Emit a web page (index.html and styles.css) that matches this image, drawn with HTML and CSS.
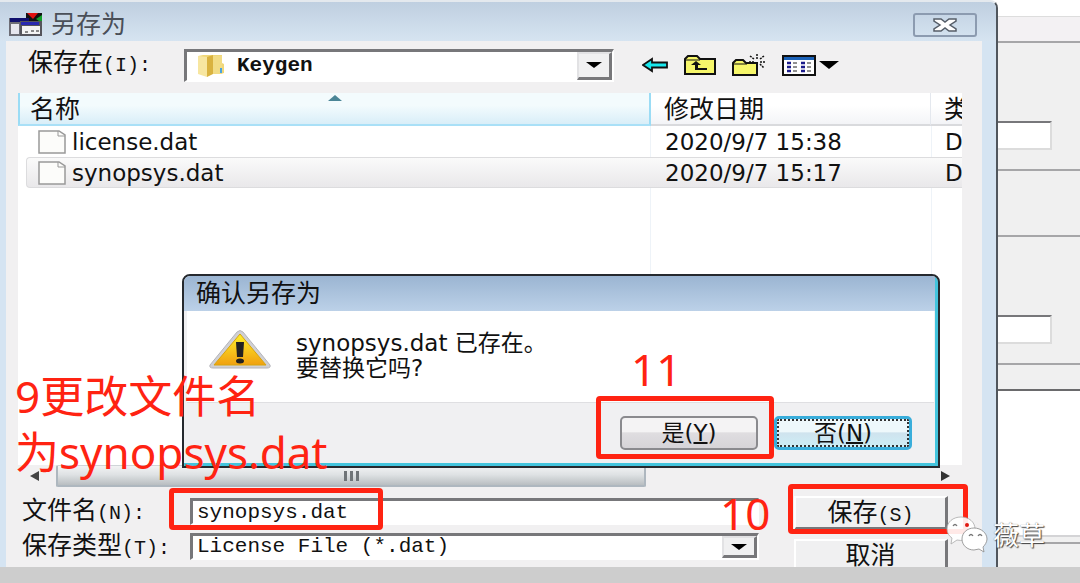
FILE: index.html
```html
<!DOCTYPE html>
<html lang="zh-CN">
<head>
    <meta charset="UTF-8">
    <meta name="viewport" content="width=device-width, initial-scale=1.0">
    <title>另存为</title>
    <link rel="stylesheet" href="styles.css">
</head>
<body>
    <main class="desktop">
        <section class="save-window">
            <header class="title-bar">
                <svg class="app-icon" width="34" height="24" viewBox="0 0 34 24">
                    <rect x="17" y="0" width="16" height="10" fill="#111"/>
                    <path d="M18 0h11l-5 6z" fill="#e01010"/>
                    <path d="M33 2v8l-6-4z" fill="#11a02a"/>
                    <rect x="0" y="5" width="20" height="18" fill="#6d6d76"/>
                    <rect x="1" y="5" width="19" height="4" fill="#10106e"/>
                    <rect x="2" y="11" width="8" height="10" fill="#e6e6ee"/>
                    <rect x="11" y="8" width="22" height="15" fill="#55555c"/>
                    <rect x="12" y="9" width="18" height="3" fill="#2929b0"/>
                    <rect x="13" y="13" width="18" height="8" fill="#f3f3f3"/>
                    <path d="M16 19h3M22 18h3M27 18h3" stroke="#888" stroke-width="2"/>
                </svg>
                <h1>另存为</h1>
                <button class="close" type="button" aria-label="关闭">
                    <svg width="24" height="14" viewBox="0 0 24 14">
                        <path d="M1 1h7l4 3 4-3h7v2l-6 4 6 4v2h-7l-4-3-4 3H1v-2l6-4-6-4z" fill="#fff" stroke="#555d68" stroke-width="1.5"/>
                    </svg>
                </button>
            </header>

            <div class="client">
                <div class="look-in">
                    <label for="folder">保存在<span class="key">(I):</span></label>
                    <div class="combo folder-combo">
                        <svg width="28" height="24" viewBox="0 0 28 24">
                            <path d="M1 2l5-1h19v8l2 1v9l-3 1H9l-8-1z" fill="#f0d778"/>
                            <path d="M1 2l9 1v20L1 20z" fill="#f7e6a0"/>
                            <path d="M10 3l6-2v19l-6 3z" fill="#d9b23f"/>
                            <path d="M16 2h9v18h-9z" fill="#f2dc85"/>
                            <path d="M24 14v5" stroke="#4aa3e0" stroke-width="2"/>
                        </svg>
                        <select id="folder"><option>Keygen</option></select>
                        <span class="drop"></span>
                    </div>
                    <div class="tools">
                        <button type="button" aria-label="后退">
                            <svg width="26" height="16" viewBox="0 0 26 16"><path d="M1 8l9-6v3.500h15v5H10V14z" fill="#18e8ee" stroke="#111" stroke-width="1.800"/></svg>
                        </button>
                        <button type="button" aria-label="向上一级">
                            <svg width="32" height="20" viewBox="0 0 32 20">
                                <path d="M1 19V4l3-3h9l3 3h15v15z" fill="#f6f66a" stroke="#111" stroke-width="2"/>
                                <path d="M1 5h15" stroke="#111"/>
                                <path d="M7 10l5-4 5 4zM11 9h3v4h9v2H11z" fill="#111"/>
                            </svg>
                        </button>
                        <button type="button" aria-label="新建文件夹">
                            <svg width="34" height="22" viewBox="0 0 34 22">
                                <path d="M1 21V9l3-3h7l3 3h11v12z" fill="#f6f66a" stroke="#111" stroke-width="2"/>
                                <path d="M1 10h14" stroke="#111"/>
                                <path d="M25 0v5M25 11v4M17 8h5M28 8h6M18 2l4 3M32 2l-4 3M28 10l4 4" stroke="#111" stroke-width="1.500" stroke-dasharray="2 1"/>
                            </svg>
                        </button>
                        <button type="button" aria-label="查看">
                            <svg width="57" height="21" viewBox="0 0 57 21">
                                <rect x="1" y="1" width="32" height="19" fill="#fff" stroke="#111" stroke-width="2"/>
                                <rect x="2" y="2" width="30" height="3" fill="#1b62b8"/>
                                <path d="M5 8h4M5 12h4M5 16h4M19 8h4M19 12h4M19 16h4" stroke="#1c1c8c" stroke-width="2.500"/>
                                <path d="M11 8h4M11 12h4M11 16h4M25 8h4M25 12h4M25 16h4" stroke="#222" stroke-width="1.200"/>
                                <path d="M37 6h20l-10 8z" fill="#000"/>
                            </svg>
                        </button>
                    </div>
                </div>

                <div class="file-list">
                    <table>
                        <colgroup><col><col class="col-date"><col class="col-type"></colgroup>
                        <thead>
                            <tr>
                                <th class="sorted">名称<svg width="14" height="6" viewBox="0 0 14 6"><path d="M0 6l7-6 7 6z" fill="#4a8596"/></svg></th>
                                <th>修改日期</th>
                                <th>类</th>
                            </tr>
                        </thead>
                        <tbody>
                            <tr>
                                <td class="file"><div><svg width="28" height="24" viewBox="0 0 28 24"><path d="M1 1h20l6 4v18H1z" fill="#fcfcfa" stroke="#999" stroke-width="1.500"/><path d="M20 1v5h7" fill="none" stroke="#999"/></svg>license.dat</div></td>
                                <td>2020/9/7 15:38</td>
                                <td>D</td>
                            </tr>
                            <tr class="selected">
                                <td class="file"><div><svg width="28" height="24" viewBox="0 0 28 24"><path d="M1 1h20l6 4v18H1z" fill="#fcfcfa" stroke="#999" stroke-width="1.500"/><path d="M20 1v5h7" fill="none" stroke="#999"/></svg>synopsys.dat</div></td>
                                <td>2020/9/7 15:17</td>
                                <td>D</td>
                            </tr>
                        </tbody>
                    </table>
                </div>
                <div class="scrollbar">
                    <svg width="9" height="10" viewBox="0 0 9 10"><path d="M9 0v10L0 5z" fill="#444"/></svg>
                    <div class="track"><div class="thumb"><i></i><i></i><i></i></div></div>
                    <svg width="9" height="10" viewBox="0 0 9 10"><path d="M0 0v10l9-5z" fill="#333"/></svg>
                </div>

                <form class="save-form">
                    <div class="fields">
                        <label for="filename">文件名<span class="key">(N):</span></label>
                        <input id="filename" class="sunken" type="text" value="synopsys.dat">
                        <label for="filetype">保存类型<span class="key">(T):</span></label>
                        <div class="combo">
                            <select id="filetype"><option>License File (*.dat)</option></select>
                            <span class="drop"></span>
                        </div>
                    </div>
                    <div class="actions">
                        <button type="button">保存<span class="key">(S)</span></button>
                        <button type="button" class="cancel">取消</button>
                    </div>
                </form>
            </div>

            <section class="confirm" role="dialog" aria-labelledby="confirm-title">
                <h2 id="confirm-title">确认另存为</h2>
                <div class="message">
                    <svg width="64" height="40" viewBox="0 0 64 40">
                        <defs><linearGradient id="warn" x1="0" y1="0" x2="0" y2="1"><stop offset="0" stop-color="#fff02a"/><stop offset="1" stop-color="#f0a010"/></linearGradient></defs>
                        <path d="M29 2q3-3 6 0L62 35q1 3-3 3H5q-4 0-3-3z" fill="#d0d0d4" stroke="#b4b4ba"/>
                        <path d="M32 4L58 35H6z" fill="url(#warn)" stroke="#d8a40c"/>
                        <path d="M28 12h8l-1 15h-6z" fill="#222"/>
                        <ellipse cx="32" cy="31" rx="4" ry="2.500" fill="#222"/>
                    </svg>
                    <p>synopsys.dat 已存在。<br>要替换它吗?</p>
                </div>
                <div class="choices">
                    <button type="button">是(<u>Y</u>)</button>
                    <button type="button" class="default">否(<u>N</u>)</button>
                </div>
            </section>
        </section>

        <aside class="back-window">
            <div class="back-head"></div>
            <div class="back-group tall"><div class="back-box"></div></div>
            <div class="back-group gap"></div>
            <div class="back-group tall"><div class="back-box"></div></div>
            <div class="back-group short"></div>
            <div class="back-page"></div>
            <div class="back-foot"></div>
        </aside>

        <!-- step marks drawn over the dialogs -->
        <p class="note note-name">9更改文件名<br>为synopsys.dat</p>
        <p class="note note-yes">11</p>
        <p class="note note-save">10</p>
        <div class="mark mark-name"></div>
        <div class="mark mark-yes"></div>
        <div class="mark mark-save"></div>

        <div class="watermark">
            <svg width="42" height="38" viewBox="0 0 42 38">
                <path d="M15 2C7 2 1 7 1 14c0 4 2 7 5 9l-1 6 6-4c9 2 18-3 18-11C29 7 23 2 15 2z" fill="#fff" fill-opacity=".9" stroke="#aaa" stroke-width=".8"/>
                <path d="M28 13c-7 0-12 5-12 11s5 11 12 11l5-1 5 3-1-5c2-2 4-5 4-8 0-6-6-11-13-11z" fill="#fff" stroke="#888" stroke-width=".8"/>
                <path d="M7 11q2-3 4 0M23 21q2-3 4 0M32 21q2-3 4 0" fill="none" stroke="#777" stroke-width="1.300"/>
                <circle cx="21" cy="10" r="2" fill="#e01810"/>
            </svg>
            <span>薇草</span>
        </div>
    </main>
    <div class="bottom-strip"></div>
</body>
</html>
```

FILE: styles.css
```css
* { box-sizing: border-box; }
body { margin: 0; min-height: 100vh; display: flex; flex-direction: column; background: #fff; color: #111; font-family: "DejaVu Sans", "Noto Sans CJK SC", sans-serif; font-size: 23px; line-height: 26px; }
h1, h2, p { margin: 0; font-weight: normal; }
svg { display: block; flex: none; }
button, input, select { font: inherit; color: inherit; margin: 0; padding: 0; border: none; border-radius: 0; background: none; }
.desktop { flex: 1; display: flex; position: relative; overflow: hidden; }
.bottom-strip { height: 16px; background: #cdcdcd; }

/* save window */
.save-window { flex: 1; display: flex; flex-direction: column; position: relative; border-top: 2px solid #e4e9ee; border-right: 2px solid #50565d; border-radius: 0 8px 0 0; background: #d5e4f2; }
.title-bar { height: 39px; display: flex; align-items: center; padding: 6px 19px 0 9px; gap: 8px; background: linear-gradient(#bfcfe0, #d6e4f1); border-radius: 0 6px 0 0; }
.title-bar h1 { flex: 1; font-size: 25px; color: #4a4f58; }
.close { width: 64px; height: 24px; display: flex; align-items: center; justify-content: center; border: 2px solid #8c9bb0; border-radius: 3px; }
.client { flex: 1; display: flex; flex-direction: column; margin: 0 14px 0 6px; background: #f1f0f1; }
label, .actions button { font-family: "Liberation Mono", "Noto Sans CJK SC", monospace; font-size: 25px; white-space: nowrap; }
.key { font-size: 20px; }

.look-in { height: 52px; display: flex; align-items: center; padding: 0 143px 4px 22px; }
.look-in label { width: 156px; }
.combo, .sunken { font-family: "Liberation Mono", monospace; font-size: 21px; background: #fff; border: 2px solid #fff; border-top: 3px solid #77777a; border-left: 3px solid #77777a; }
.combo { display: flex; align-items: stretch; min-width: 0; }
.combo select { flex: 1; min-width: 0; appearance: none; line-height: 20px; }
.drop { width: 35px; display: flex; align-items: center; justify-content: center; background: #f0f0f1; border: 2px solid #e2e2e4; border-right: 3px solid #77777a; border-bottom: 3px solid #77777a; }
.drop::before { content: ""; border: 8px solid transparent; border-top: 6px solid #000; border-bottom: none; }
.folder-combo { flex: 1; height: 33px; }
.folder-combo svg { align-self: center; margin-left: 10px; }
.folder-combo select { padding-left: 12px; font-weight: bold; }
.tools { display: flex; align-items: center; gap: 16px; margin-left: 28px; }

.file-list { flex: 1; margin: 0 20px 0 12px; overflow: hidden; background: linear-gradient(#eef3f8, #eef3f8) right 311px top / 1px 100% no-repeat, linear-gradient(#eef3f8, #eef3f8) right 30px top / 1px 100% no-repeat, #fff; }
.file-list table { width: 100%; table-layout: fixed; border-collapse: separate; border-spacing: 0; }
.col-date { width: 280px; }
.col-type { width: 31px; }
.file-list th { height: 33px; padding: 2px 0 0 13px; text-align: left; font-weight: normal; font-size: 25px; overflow: hidden; white-space: nowrap; background: linear-gradient(#fff 40%, #f3f4f7); border-bottom: 2px solid #d9dadd; border-right: 1px solid #e4e8ee; }
.file-list th.sorted { position: relative; border-left: 2px solid #9bdcf5; border-right: 2px solid #9bdcf5; border-bottom-color: #a9e0f7; background: linear-gradient(#f3fbfd 40%, #d9eef8); padding-left: 10px; }
.sorted svg { position: absolute; left: calc(50% - 7px); top: 2px; }
.file-list td { height: 31px; padding: 0 0 0 14px; white-space: nowrap; overflow: hidden; }
.file-list td.file { padding: 0 0 0 8px; }
.file-list th:last-child, .file-list td:last-child { border-right: none; }
.file div { display: flex; align-items: center; gap: 6px; height: 30px; padding-left: 11px; border: 1px solid transparent; }
.selected td { background: linear-gradient(#fafafa, #e9e8ea); border-top: 1px solid #dcdcde; border-bottom: 1px solid #dcdcde; }
.file-list .selected td.file { background: none; border: none; }
.selected .file div { height: 31px; background: linear-gradient(#fafafa, #e9e8ea); border-color: #dcdcde; border-right: none; border-radius: 4px 0 0 4px; }

.scrollbar { height: 22px; display: flex; align-items: center; margin: 0 20px 0 12px; padding: 0 12px; gap: 17px; }
.track { flex: 1; height: 22px; }
.thumb { width: 68%; height: 22px; display: flex; align-items: center; justify-content: center; gap: 3px; background: linear-gradient(#f2f3f4, #dfe2e4 45%, #b9bec1); border: 2px solid #aeb7bf; border-top: 1px solid #d0d4d8; border-radius: 2px; }
.thumb i { width: 3px; height: 10px; background: #6f7478; }

.save-form { display: flex; gap: 35px; padding: 9px 34px 0 16px; }
.fields { flex: 1; display: grid; grid-template-columns: 168px 1fr; grid-auto-rows: 27px; row-gap: 8px; padding-top: 2px; align-items: center; min-width: 0; }
.fields label { padding-top: 3px; }
.sunken { width: 100%; height: 27px; padding: 0 4px; line-height: 20px; }
.fields .combo { height: 27px; }
.fields .combo select { padding-left: 4px; }
.actions { width: 154px; display: flex; flex-direction: column; gap: 9px; }
.actions button { height: 34px; padding-top: 4px; background: #f0f0f1; border: 2px solid #fff; border-right: 3px solid #77777a; border-bottom: 3px solid #77777a; }
.actions .cancel { height: 28px; border-bottom: none; }

/* confirm dialog */
.confirm { position: absolute; left: 182px; right: 56px; top: 272px; overflow: hidden; background: #f0f0f2; border: 2px solid #25292e; border-radius: 8px 8px 0 0; box-shadow: inset -3px -3px #43c4dd; padding: 0 4px 3px 3px; }
.confirm h2 { height: 35px; padding: 2px 12px; margin: 0 -1px 0 -3px; font-size: 25px; line-height: 32px; background: linear-gradient(#9bb5d2, #bcd1e8); }
.message { height: 92px; display: flex; align-items: flex-start; gap: 24px; padding: 19px 21px 0; background: #fff; border-bottom: 1px solid #dfdfe2; }
.message p { padding-top: 1px; line-height: 25px; }
.choices { display: flex; justify-content: flex-end; gap: 16px; padding: 13px 22px; }
.choices button { width: 138px; height: 34px; border: 2px solid #8a8a8e; border-radius: 5px; background: linear-gradient(#f4f3f4 45%, #dfdde0 50%, #d6d4d8); }
.choices .default { border: 3px solid #3aaedb; background: linear-gradient(#eef8fb 45%, #cfe3ee 50%, #cdeef6); outline: 2px dotted #333; outline-offset: -5px; }
.choices u { text-decoration-thickness: 2px; }

/* window behind */
.back-window { width: 82px; display: flex; flex-direction: column; padding-top: 16px; background: #fff; }
.back-window > div { border-bottom: 2px solid #a6a6a8; background: #f0f0f0; }
.back-window .back-head { height: 27px; background: #f3f1f3; border-top: 1px solid #ddd; }
.back-window .tall { height: 128px; padding-top: 78px; }
.back-box { width: 54px; height: 29px; background: #fff; border: 2px solid #dcdcdc; border-top-color: #77777a; border-left: none; }
.back-window .gap { height: 66px; }
.back-window .short { height: 26px; border-bottom-color: #6a6a6c; }
.back-window .back-page { flex: 1; background: #fff; border-bottom-color: #d4d4d6; }
.back-window .back-foot { height: 30px; border-bottom: none; background: linear-gradient(#f0f0f0 5px, #a6a6a8 5px, #a6a6a8 7px, #f0f0f0 7px); }

/* step marks */
.note { position: absolute; color: #ff2312; font-family: "Noto Sans", "Noto Sans CJK SC", sans-serif; font-size: 44px; line-height: 56px; white-space: nowrap; }
.note-name { left: 15px; top: 368px; }
.note-yes { left: 631px; top: 341px; }
.note-save { left: 720px; top: 485px; }
.mark { position: absolute; border: 5px solid #ff2312; border-radius: 4px; }
.mark-name { left: 169px; top: 488px; width: 214px; height: 42px; }
.mark-yes { left: 596px; top: 396px; width: 178px; height: 63px; }
.mark-save { left: 788px; top: 484px; width: 180px; height: 50px; }
.watermark { position: absolute; right: 35px; bottom: 14px; display: flex; align-items: center; gap: 5px; font-size: 26px; line-height: 34px; color: #fff; font-family: "Noto Sans CJK SC", sans-serif; text-shadow: 1px 1px 1px #444, 0 0 1px #777; }
```
